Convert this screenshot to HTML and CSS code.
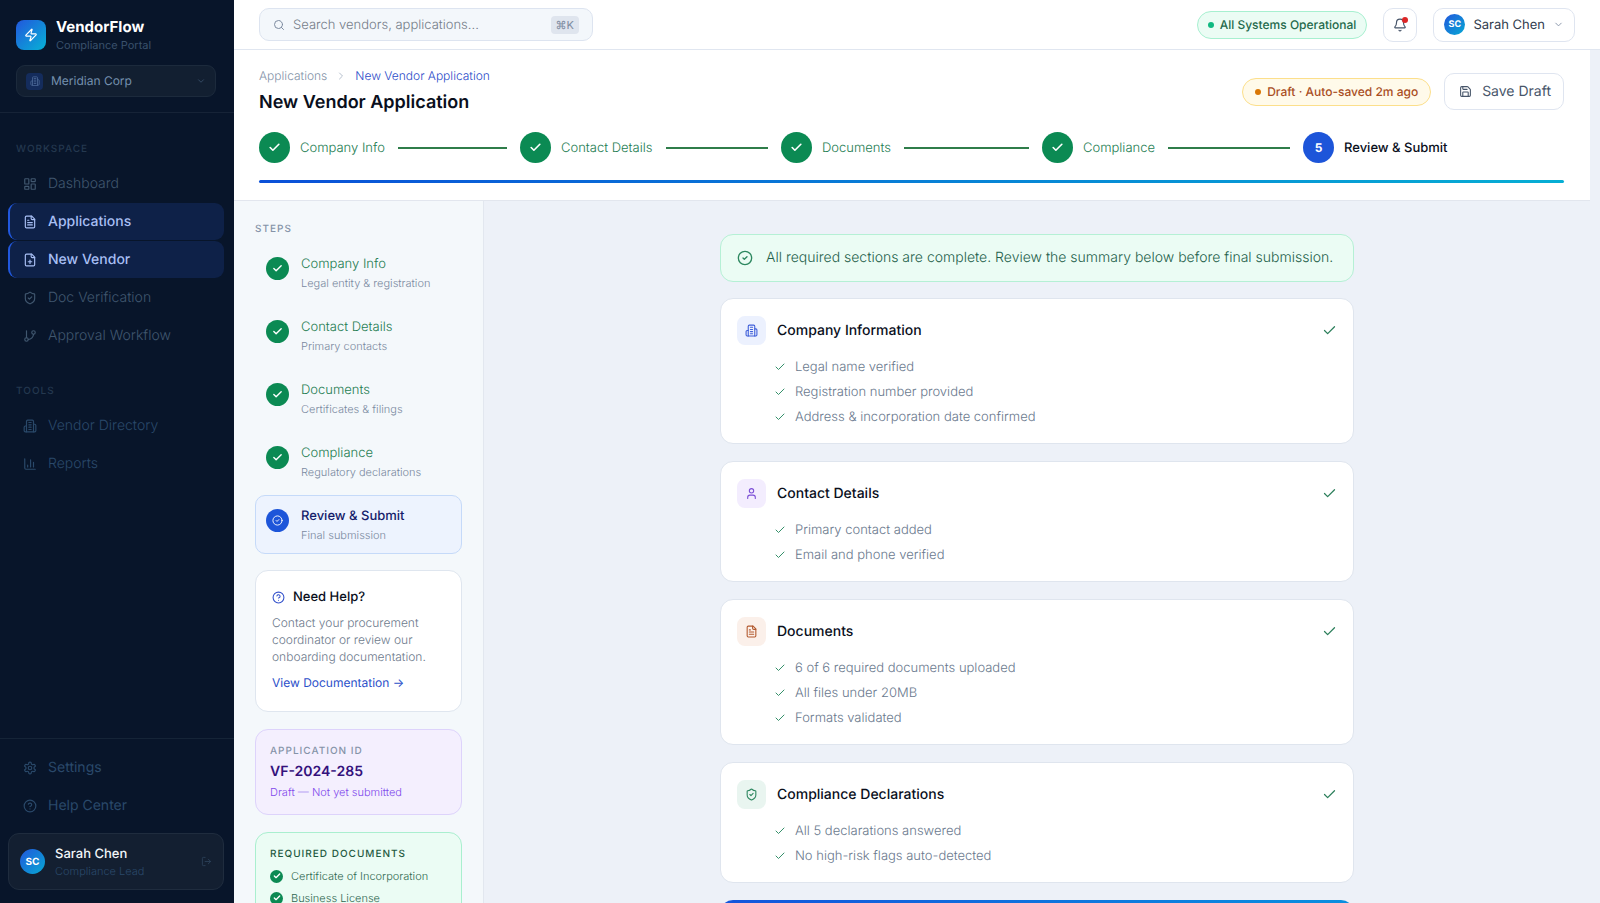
FILE: index.html
```html
<!DOCTYPE html>
<html lang="en">
<head>
    <meta charset="UTF-8">
    <meta name="viewport" content="width=device-width, initial-scale=1.0">
    <title>VendorFlow - New Vendor Application</title>
    <link rel="stylesheet" href="styles.css">
</head>
<body>
    <!-- icon set -->
    <svg class="sprite" aria-hidden="true">
        <symbol id="zap" viewBox="0 0 24 24"><path d="M4 14a1 1 0 0 1-.78-1.63l9.9-10.2a.5.5 0 0 1 .86.46l-1.92 6.02A1 1 0 0 0 13 10h7a1 1 0 0 1 .78 1.63l-9.9 10.2a.5.5 0 0 1-.86-.46l1.92-6.02A1 1 0 0 0 11 14z"/></symbol>
        <symbol id="building" viewBox="0 0 24 24"><path d="M6 22V4a2 2 0 0 1 2-2h8a2 2 0 0 1 2 2v18Z"/><path d="M6 12H4a2 2 0 0 0-2 2v6a2 2 0 0 0 2 2h2"/><path d="M18 9h2a2 2 0 0 1 2 2v9a2 2 0 0 1-2 2h-2"/><path d="M10 6h4M10 10h4M10 14h4M10 18h4"/></symbol>
        <symbol id="down" viewBox="0 0 24 24"><path d="m6 9 6 6 6-6"/></symbol>
        <symbol id="right" viewBox="0 0 24 24"><path d="m9 18 6-6-6-6"/></symbol>
        <symbol id="dashboard" viewBox="0 0 24 24"><rect x="3" y="3" width="7" height="9" rx="1"/><rect x="14" y="3" width="7" height="5" rx="1"/><rect x="14" y="12" width="7" height="9" rx="1"/><rect x="3" y="16" width="7" height="5" rx="1"/></symbol>
        <symbol id="file" viewBox="0 0 24 24"><path d="M15 2H6a2 2 0 0 0-2 2v16a2 2 0 0 0 2 2h12a2 2 0 0 0 2-2V7Z"/><path d="M14 2v4a2 2 0 0 0 2 2h4M10 9H8M16 13H8M16 17H8"/></symbol>
        <symbol id="file-plus" viewBox="0 0 24 24"><path d="M15 2H6a2 2 0 0 0-2 2v16a2 2 0 0 0 2 2h12a2 2 0 0 0 2-2V7Z"/><path d="M14 2v4a2 2 0 0 0 2 2h4M9 15h6M12 12v6"/></symbol>
        <symbol id="shield" viewBox="0 0 24 24"><path d="M20 13c0 5-3.500 7.500-7.660 8.950a1 1 0 0 1-.67-.01C7.500 20.500 4 18 4 13V6a1 1 0 0 1 1-1c2 0 4.500-1.200 6.240-2.720a1.170 1.170 0 0 1 1.520 0C14.510 3.810 17 5 19 5a1 1 0 0 1 1 1z"/><path d="m9 12 2 2 4-4"/></symbol>
        <symbol id="branch" viewBox="0 0 24 24"><path d="M6 3v12"/><circle cx="18" cy="6" r="3"/><circle cx="6" cy="18" r="3"/><path d="M18 9a9 9 0 0 1-9 9"/></symbol>
        <symbol id="chart" viewBox="0 0 24 24"><path d="M3 3v16a2 2 0 0 0 2 2h16M18 17V9M13 17V5M8 17v-3"/></symbol>
        <symbol id="settings" viewBox="0 0 24 24"><path d="M12.220 2h-.44a2 2 0 0 0-2 2v.18a2 2 0 0 1-1 1.730l-.43.25a2 2 0 0 1-2 0l-.15-.08a2 2 0 0 0-2.730.73l-.22.38a2 2 0 0 0 .73 2.730l.15.1a2 2 0 0 1 1 1.720v.51a2 2 0 0 1-1 1.740l-.15.09a2 2 0 0 0-.73 2.730l.22.38a2 2 0 0 0 2.730.73l.15-.08a2 2 0 0 1 2 0l.43.25a2 2 0 0 1 1 1.730V20a2 2 0 0 0 2 2h.44a2 2 0 0 0 2-2v-.18a2 2 0 0 1 1-1.730l.43-.25a2 2 0 0 1 2 0l.15.08a2 2 0 0 0 2.730-.73l.22-.39a2 2 0 0 0-.73-2.730l-.15-.08a2 2 0 0 1-1-1.740v-.5a2 2 0 0 1 1-1.740l.15-.09a2 2 0 0 0 .73-2.730l-.22-.38a2 2 0 0 0-2.730-.73l-.15.08a2 2 0 0 1-2 0l-.43-.25a2 2 0 0 1-1-1.730V4a2 2 0 0 0-2-2z"/><circle cx="12" cy="12" r="3"/></symbol>
        <symbol id="help" viewBox="0 0 24 24"><circle cx="12" cy="12" r="10"/><path d="M9.090 9a3 3 0 0 1 5.830 1c0 2-3 3-3 3M12 17h.01"/></symbol>
        <symbol id="logout" viewBox="0 0 24 24"><path d="M9 21H5a2 2 0 0 1-2-2V5a2 2 0 0 1 2-2h4M16 17l5-5-5-5M21 12H9"/></symbol>
        <symbol id="search" viewBox="0 0 24 24"><circle cx="11" cy="11" r="8"/><path d="m21 21-4.300-4.300"/></symbol>
        <symbol id="bell" viewBox="0 0 24 24"><path d="M10.268 21a2 2 0 0 0 3.464 0"/><path d="M3.262 15.326A1 1 0 0 0 4 17h16a1 1 0 0 0 .74-1.673C19.410 13.956 18 12.499 18 8A6 6 0 0 0 6 8c0 4.499-1.411 5.956-2.738 7.326"/></symbol>
        <symbol id="save" viewBox="0 0 24 24"><path d="M15.200 3a2 2 0 0 1 1.400.6l3.800 3.800a2 2 0 0 1 .6 1.400V19a2 2 0 0 1-2 2H5a2 2 0 0 1-2-2V5a2 2 0 0 1 2-2z"/><path d="M17 21v-7a1 1 0 0 0-1-1H8a1 1 0 0 0-1 1v7M7 3v4a1 1 0 0 0 1 1h7"/></symbol>
        <symbol id="check" viewBox="0 0 24 24"><path d="M20 6 9 17l-5-5"/></symbol>
        <symbol id="circle-check" viewBox="0 0 24 24"><circle cx="12" cy="12" r="10"/><path d="m9 12 2 2 4-4"/></symbol>
        <symbol id="user" viewBox="0 0 24 24"><path d="M19 21v-2a4 4 0 0 0-4-4H9a4 4 0 0 0-4 4v2"/><circle cx="12" cy="7" r="4"/></symbol>
    </svg>

    <aside class="sidebar">
        <div class="brand">
            <div class="brand-row">
                <span class="logo"><svg class="icon"><use href="#zap"/></svg></span>
                <div>
                    <div class="brand-name">VendorFlow</div>
                    <div class="brand-sub">Compliance Portal</div>
                </div>
            </div>
            <div class="org">
                <span class="org-icon"><svg class="icon"><use href="#building"/></svg></span>
                <select aria-label="Organization">
                    <option>Meridian Corp</option>
                </select>
                <svg class="icon small"><use href="#down"/></svg>
            </div>
        </div>

        <nav class="menu">
            <h2>Workspace</h2>
            <a href="#"><svg class="icon"><use href="#dashboard"/></svg>Dashboard</a>
            <a href="#" class="active"><svg class="icon"><use href="#file"/></svg>Applications</a>
            <a href="#" class="active"><svg class="icon"><use href="#file-plus"/></svg>New Vendor</a>
            <a href="#"><svg class="icon"><use href="#shield"/></svg>Doc Verification</a>
            <a href="#"><svg class="icon"><use href="#branch"/></svg>Approval Workflow</a>
            <h2>Tools</h2>
            <a href="#" class="dim"><svg class="icon"><use href="#building"/></svg>Vendor Directory</a>
            <a href="#" class="dim"><svg class="icon"><use href="#chart"/></svg>Reports</a>
        </nav>

        <div class="sidebar-bottom">
            <a href="#" class="dim"><svg class="icon"><use href="#settings"/></svg>Settings</a>
            <a href="#" class="dim"><svg class="icon"><use href="#help"/></svg>Help Center</a>
            <div class="profile">
                <span class="avatar">SC</span>
                <div class="profile-text">
                    <div class="profile-name">Sarah Chen</div>
                    <div class="profile-role">Compliance Lead</div>
                </div>
                <button class="logout" aria-label="Log out"><svg class="icon"><use href="#logout"/></svg></button>
            </div>
        </div>
    </aside>

    <div class="main">
        <header class="topbar">
            <div class="search">
                <svg class="icon"><use href="#search"/></svg>
                <input type="text" placeholder="Search vendors, applications..." aria-label="Search">
                <kbd>⌘K</kbd>
            </div>
            <div class="topbar-right">
                <span class="pill green">All Systems Operational</span>
                <button class="bell" aria-label="Notifications"><svg class="icon"><use href="#bell"/></svg><span class="badge"></span></button>
                <button class="user"><span class="avatar">SC</span>Sarah Chen<svg class="icon small"><use href="#down"/></svg></button>
            </div>
        </header>

        <div class="page">
            <div class="page-header">
                <div class="title-row">
                    <div>
                        <nav class="breadcrumb">
                            <a href="#">Applications</a>
                            <svg class="icon small"><use href="#right"/></svg>
                            <a href="#" class="current">New Vendor Application</a>
                        </nav>
                        <h1>New Vendor Application</h1>
                    </div>
                    <div class="actions">
                        <span class="pill amber">Draft · Auto-saved 2m ago</span>
                        <button class="save"><svg class="icon"><use href="#save"/></svg>Save Draft</button>
                    </div>
                </div>

                <ol class="stepper">
                    <li><span class="dot"><svg class="icon"><use href="#check"/></svg></span>Company Info<span class="line"></span></li>
                    <li><span class="dot"><svg class="icon"><use href="#check"/></svg></span>Contact Details<span class="line"></span></li>
                    <li><span class="dot"><svg class="icon"><use href="#check"/></svg></span>Documents<span class="line"></span></li>
                    <li><span class="dot"><svg class="icon"><use href="#check"/></svg></span>Compliance<span class="line"></span></li>
                    <li class="current"><span class="dot">5</span>Review &amp; Submit</li>
                </ol>
                <div class="progress"></div>
            </div>

            <div class="columns">
                <aside class="steps">
                    <h2>Steps</h2>
                    <div class="step-list">
                        <a href="#" class="step">
                            <span class="dot"><svg class="icon"><use href="#check"/></svg></span>
                            <span><strong>Company Info</strong><small>Legal entity &amp; registration</small></span>
                        </a>
                        <a href="#" class="step">
                            <span class="dot"><svg class="icon"><use href="#check"/></svg></span>
                            <span><strong>Contact Details</strong><small>Primary contacts</small></span>
                        </a>
                        <a href="#" class="step">
                            <span class="dot"><svg class="icon"><use href="#check"/></svg></span>
                            <span><strong>Documents</strong><small>Certificates &amp; filings</small></span>
                        </a>
                        <a href="#" class="step">
                            <span class="dot"><svg class="icon"><use href="#check"/></svg></span>
                            <span><strong>Compliance</strong><small>Regulatory declarations</small></span>
                        </a>
                        <a href="#" class="step current">
                            <span class="dot"><svg class="icon"><use href="#circle-check"/></svg></span>
                            <span><strong>Review &amp; Submit</strong><small>Final submission</small></span>
                        </a>
                    </div>

                    <div class="box help">
                        <h3><svg class="icon"><use href="#help"/></svg>Need Help?</h3>
                        <p>Contact your procurement coordinator or review our onboarding documentation.</p>
                        <a href="#">View Documentation →</a>
                    </div>

                    <div class="box app-id">
                        <h4>Application ID</h4>
                        <div class="id">VF-2024-285</div>
                        <div class="id-status">Draft — Not yet submitted</div>
                    </div>

                    <div class="box required">
                        <h4>Required Documents</h4>
                        <ul>
                            <li><span class="dot"><svg class="icon"><use href="#check"/></svg></span>Certificate of Incorporation</li>
                            <li><span class="dot"><svg class="icon"><use href="#check"/></svg></span>Business License</li>
                        </ul>
                    </div>
                </aside>

                <main class="review">
                    <div class="notice"><svg class="icon"><use href="#circle-check"/></svg>All required sections are complete. Review the summary below before final submission.</div>

                    <section class="card">
                        <div class="card-head">
                            <span class="card-icon blue"><svg class="icon"><use href="#building"/></svg></span>
                            <h3>Company Information</h3>
                            <svg class="icon done"><use href="#check"/></svg>
                        </div>
                        <ul>
                            <li><svg class="icon"><use href="#check"/></svg>Legal name verified</li>
                            <li><svg class="icon"><use href="#check"/></svg>Registration number provided</li>
                            <li><svg class="icon"><use href="#check"/></svg>Address &amp; incorporation date confirmed</li>
                        </ul>
                    </section>

                    <section class="card">
                        <div class="card-head">
                            <span class="card-icon purple"><svg class="icon"><use href="#user"/></svg></span>
                            <h3>Contact Details</h3>
                            <svg class="icon done"><use href="#check"/></svg>
                        </div>
                        <ul>
                            <li><svg class="icon"><use href="#check"/></svg>Primary contact added</li>
                            <li><svg class="icon"><use href="#check"/></svg>Email and phone verified</li>
                        </ul>
                    </section>

                    <section class="card">
                        <div class="card-head">
                            <span class="card-icon orange"><svg class="icon"><use href="#file"/></svg></span>
                            <h3>Documents</h3>
                            <svg class="icon done"><use href="#check"/></svg>
                        </div>
                        <ul>
                            <li><svg class="icon"><use href="#check"/></svg>6 of 6 required documents uploaded</li>
                            <li><svg class="icon"><use href="#check"/></svg>All files under 20MB</li>
                            <li><svg class="icon"><use href="#check"/></svg>Formats validated</li>
                        </ul>
                    </section>

                    <section class="card">
                        <div class="card-head">
                            <span class="card-icon teal"><svg class="icon"><use href="#shield"/></svg></span>
                            <h3>Compliance Declarations</h3>
                            <svg class="icon done"><use href="#check"/></svg>
                        </div>
                        <ul>
                            <li><svg class="icon"><use href="#check"/></svg>All 5 declarations answered</li>
                            <li><svg class="icon"><use href="#check"/></svg>No high-risk flags auto-detected</li>
                        </ul>
                    </section>

                    <div class="submit-panel"></div>
                </main>
            </div>
        </div>
    </div>
</body>
</html>
```
FILE: styles.css
```css
* {
    box-sizing: border-box;
}
body {
    margin: 0;
    height: 100vh;
    display: flex;
    font-family: Inter, "Liberation Sans", sans-serif;
    font-size: 13px;
    font-weight: 300;
    line-height: 20px;
    text-rendering: geometricPrecision;
    background-color: #edf1f8;
    color: #0a0f1c;
    overflow: hidden;
}
h1, h2, h3, h4, p, ul, ol {
    margin: 0;
    padding: 0;
}
ul, ol {
    list-style: none;
}
a {
    text-decoration: none;
}
button, input, select {
    font: inherit;
    color: inherit;
    text-rendering: inherit;
}
button {
    cursor: pointer;
}
.sprite {
    display: none;
}
.icon {
    width: 14px;
    height: 14px;
    flex-shrink: 0;
    fill: none;
    stroke: currentColor;
    stroke-width: 2;
    stroke-linecap: round;
    stroke-linejoin: round;
}
.icon.small {
    width: 12px;
    height: 12px;
}
.avatar {
    display: flex;
    align-items: center;
    justify-content: center;
    flex-shrink: 0;
    border-radius: 50%;
    background: linear-gradient(135deg, #2257dc, #06a9d4);
    color: white;
    font-weight: 700;
}
.dot {
    display: flex;
    align-items: center;
    justify-content: center;
    flex-shrink: 0;
    border-radius: 50%;
    background-color: #0b8a53;
    color: white;
}
.dot .icon {
    stroke-width: 3;
}

/* sidebar */
.sidebar {
    width: 234px;
    flex-shrink: 0;
    display: flex;
    flex-direction: column;
    background-color: #08152a;
    color: #3a516c;
}
.brand {
    padding: 17px 18px 15px 16px;
    border-bottom: 1px solid #162337;
}
.brand-row {
    display: flex;
    align-items: center;
    gap: 10px;
    margin-bottom: 12px;
}
.logo {
    display: flex;
    align-items: center;
    justify-content: center;
    width: 30px;
    height: 30px;
    border-radius: 8px;
    background: linear-gradient(135deg, #2257dc, #06b2d6);
    color: white;
}
.brand-name {
    color: white;
    font-size: 15px;
    font-weight: 700;
    line-height: 20px;
}
.brand-sub {
    font-size: 11px;
    font-weight: 400;
    line-height: 16px;
}
.org {
    display: flex;
    align-items: center;
    gap: 8px;
    height: 32px;
    padding: 0 9px;
    border: 1px solid #1c2a3c;
    border-radius: 9px;
    background-color: #121f31;
}
.org-icon {
    display: flex;
    align-items: center;
    justify-content: center;
    width: 17px;
    height: 17px;
    border-radius: 4px;
    background-color: #142c5c;
    color: #4a6796;
}
.org-icon .icon {
    width: 10px;
    height: 10px;
}
.org select {
    flex: 1;
    min-width: 0;
    padding: 0;
    border: none;
    background: none;
    appearance: none;
    color: #7490ae;
    font-size: 12px;
    font-weight: 400;
}
.org .small {
    width: 10px;
    height: 10px;
}
.menu {
    flex: 1;
    padding: 28px 10px 0 8px;
}
.menu h2 {
    padding: 0 8px;
    margin-bottom: 8px;
    color: #24384f;
    font-size: 10px;
    font-weight: 500;
    line-height: 16px;
    letter-spacing: 1px;
    text-transform: uppercase;
}
.menu a + h2 {
    margin-top: 29px;
}
.sidebar a {
    display: flex;
    align-items: center;
    gap: 11px;
    height: 37px;
    margin-bottom: 1px;
    padding-left: 13px;
    border-left: 2px solid transparent;
    border-radius: 9px;
    color: #40576f;
    font-size: 14px;
}
.sidebar a.active {
    border-left-color: #2158de;
    background-color: #0e2148;
    color: #a8bff4;
    font-weight: 500;
}
.sidebar a.dim {
    color: #2a496a;
}
.sidebar-bottom {
    padding: 10px 10px 13px 8px;
    border-top: 1px solid #152437;
}
.sidebar-bottom a {
    font-weight: 400;
}
.profile {
    display: flex;
    align-items: center;
    gap: 10px;
    height: 57px;
    margin-top: 9px;
    padding: 0 11px;
    border: 1px solid #1f2c3e;
    border-radius: 11px;
    background-color: #131f31;
}
.profile .avatar {
    width: 25px;
    height: 25px;
    font-size: 10px;
}
.profile-text {
    flex: 1;
}
.profile-name {
    color: #f1f5f9;
    font-size: 13px;
    font-weight: 500;
    line-height: 18px;
}
.profile-role {
    color: #2a496a;
    font-size: 11px;
    line-height: 16px;
}
.logout {
    display: flex;
    padding: 0;
    border: none;
    background: none;
    color: #2b4058;
}
.logout .icon {
    width: 11px;
    height: 11px;
}

/* top bar */
.main {
    flex: 1;
    min-width: 0;
    display: flex;
    flex-direction: column;
}
.topbar {
    display: flex;
    align-items: center;
    justify-content: space-between;
    height: 50px;
    flex-shrink: 0;
    padding: 0 25px;
    border-bottom: 1px solid #e0e6f0;
    background-color: white;
}
.search {
    display: flex;
    align-items: center;
    gap: 8px;
    width: 334px;
    height: 33px;
    padding: 0 13px;
    border: 1px solid #dde4f0;
    border-radius: 10px;
    background-color: #f3f7fb;
    color: #7d8ba0;
}
.search .icon {
    width: 12px;
    height: 12px;
}
.search input {
    flex: 1;
    min-width: 0;
    padding: 0;
    border: none;
    outline: none;
    background: none;
}
.search input::placeholder {
    color: #757d89;
}
kbd {
    padding: 0 5px;
    border-radius: 4px;
    background-color: #dfe5ee;
    color: #7d8ba0;
    font-family: inherit;
    font-size: 11px;
    font-weight: 400;
    line-height: 18px;
}
.topbar-right {
    display: flex;
    align-items: center;
    gap: 16px;
}
.pill {
    display: flex;
    align-items: center;
    gap: 6px;
    height: 28px;
    padding: 0 10px;
    border: 1px solid;
    border-radius: 14px;
    font-size: 12px;
    font-weight: 500;
}
.pill::before {
    content: "";
    width: 6px;
    height: 6px;
    border-radius: 50%;
    background-color: #10b981;
}
.pill.green {
    border-color: #a7f0d0;
    background-color: #ebfcf4;
    color: #24694b;
}
.pill.amber {
    padding: 0 12px;
    border-color: #fcdf8b;
    background-color: #fffaea;
    color: #a94e1f;
}
.pill.amber::before {
    background-color: #d97706;
}
.bell, .user, .save {
    display: flex;
    align-items: center;
    height: 34px;
    border: 1px solid #dfe5f0;
    border-radius: 10px;
    background-color: white;
}
.bell {
    position: relative;
    justify-content: center;
    width: 34px;
    padding: 0;
    color: #475569;
}
.badge {
    position: absolute;
    top: 8px;
    right: 8px;
    width: 6px;
    height: 6px;
    border-radius: 50%;
    background-color: #dc2626;
}
.user {
    gap: 8px;
    padding: 0 10px;
    color: #303b4d;
    font-weight: 400;
}
.user .avatar {
    width: 21px;
    height: 21px;
    font-size: 9px;
}
.user .small {
    width: 11px;
    height: 11px;
    color: #8492a6;
}

/* page header */
.page {
    flex: 1;
    min-height: 0;
    margin-right: 10px;
    overflow-y: auto;
    scrollbar-width: none;
}
.page-header {
    padding: 16px 26px 17px 25px;
    border-bottom: 1px solid #e2e6ee;
    background-color: white;
}
.title-row {
    display: flex;
    align-items: center;
    justify-content: space-between;
    margin-bottom: 15px;
}
.breadcrumb {
    display: flex;
    align-items: center;
    gap: 8px;
    font-size: 12px;
}
.breadcrumb .icon {
    color: #b6c0ce;
}
.breadcrumb a {
    color: #8493a8;
}
.breadcrumb a.current {
    color: #2b4bc9;
}
h1 {
    margin-top: 3px;
    font-size: 18px;
    font-weight: 600;
    line-height: 28px;
}
.actions {
    display: flex;
    align-items: center;
    gap: 13px;
}
.save {
    gap: 10px;
    height: 37px;
    padding: 0 12px 0 14px;
    color: #475569;
    font-size: 14px;
    font-weight: 400;
}
.save .icon {
    width: 13px;
    height: 13px;
}
.stepper {
    display: flex;
    margin-bottom: 17px;
}
.stepper li {
    flex: 1 1 0;
    display: flex;
    align-items: center;
    gap: 10px;
    color: #247d52;
}
.stepper li.current {
    color: #0a0f1c;
    font-weight: 500;
}
.stepper .dot {
    width: 31px;
    height: 31px;
    font-size: 12px;
    font-weight: 700;
}
.stepper .icon {
    width: 13px;
    height: 13px;
}
.stepper .current .dot {
    background-color: #1d55d9;
}
.line {
    flex: 1;
    height: 2px;
    margin: 0 13px 0 3px;
    background-color: #2f7d4a;
}
.progress {
    height: 3px;
    border-radius: 2px;
    background: linear-gradient(90deg, #0a50d8, #06aed4);
}

/* left column */
.columns {
    display: flex;
}
.steps {
    width: 250px;
    flex-shrink: 0;
    padding: 20px 21px;
    border-right: 1px solid #e2e7ef;
    background-color: #f4f8fb;
}
.steps h2, .steps h4 {
    color: #8593a8;
    font-size: 10px;
    font-weight: 500;
    line-height: 16px;
    letter-spacing: 1px;
    text-transform: uppercase;
}
.steps h2 {
    margin-bottom: 6px;
}
.step-list {
    display: flex;
    flex-direction: column;
    gap: 4px;
    margin-bottom: 16px;
}
.step {
    display: flex;
    gap: 12px;
    height: 59px;
    padding: 10px;
    border: 1px solid transparent;
    border-radius: 10px;
}
.step .dot {
    width: 23px;
    height: 23px;
    margin-top: 3px;
}
.step .icon {
    width: 11px;
    height: 11px;
}
.step strong, .step small {
    display: block;
}
.step strong {
    color: #247d52;
    font-size: 13px;
    font-weight: 300;
    line-height: 20px;
}
.step small {
    color: #7a89a0;
    font-size: 11px;
    line-height: 18px;
}
.step.current {
    border-color: #c5daf9;
    background-color: #edf3fe;
}
.step.current .dot {
    background-color: #1d55d9;
}
.step.current .icon {
    stroke-width: 2;
}
.step.current strong {
    color: #151d6b;
    font-weight: 500;
}
.box {
    margin-bottom: 17px;
    padding: 13px 14px;
    border: 1px solid #dfe6ef;
    border-radius: 13px;
}
.help {
    padding: 16px;
    background-color: white;
}
.help h3 {
    display: flex;
    align-items: center;
    gap: 8px;
    margin-bottom: 7px;
    font-size: 13px;
    font-weight: 500;
}
.help .icon {
    width: 13px;
    height: 13px;
    color: #3553cc;
}
.help p {
    margin-bottom: 8px;
    color: #6d7a8c;
    font-size: 12px;
    line-height: 17px;
}
.help a {
    display: block;
    margin-bottom: 2px;
    color: #2b4fc9;
    font-size: 12px;
    font-weight: 400;
}
.app-id {
    border-color: #ddd3fb;
    background-color: #f4effe;
}
.id {
    margin-top: 3px;
    color: #34127c;
    font-size: 14px;
    font-weight: 600;
}
.id-status {
    margin-top: 1px;
    color: #8049ec;
    font-size: 11px;
    line-height: 18px;
}
.required {
    border-color: #a9efcf;
    background-color: #ebfcf4;
}
.steps .required h4 {
    margin-bottom: 4px;
    color: #1f5a41;
}
.required li {
    display: flex;
    align-items: center;
    gap: 8px;
    margin-bottom: 2px;
    color: #2f6850;
    font-size: 11px;
}
.required .dot {
    width: 13px;
    height: 13px;
}
.required .icon {
    width: 8px;
    height: 8px;
    stroke-width: 4;
}

/* review column */
.review {
    flex: 1;
    min-width: 0;
    max-width: 634px;
    margin: 0 auto;
    padding-top: 33px;
}
.notice {
    display: flex;
    align-items: center;
    gap: 13px;
    min-height: 48px;
    margin-bottom: 16px;
    padding: 0 16px;
    border: 1px solid #b5f0d5;
    border-radius: 13px;
    background-color: #ebfcf4;
    color: #23604a;
    font-size: 14px;
}
.notice .icon {
    width: 16px;
    height: 16px;
    color: #2c875f;
}
.card {
    margin-bottom: 17px;
    padding: 17px 16px 16px;
    border: 1px solid #dfe5ee;
    border-radius: 13px;
    background-color: white;
}
.card-head {
    display: flex;
    align-items: center;
    gap: 11px;
    margin-bottom: 12px;
}
.card-icon {
    display: flex;
    align-items: center;
    justify-content: center;
    width: 29px;
    height: 29px;
    border-radius: 8px;
}
.card-icon.blue {
    background-color: #ecf1fe;
    color: #3f5fd9;
}
.card-icon.purple {
    background-color: #f3edfe;
    color: #7c4fd6;
}
.card-icon.orange {
    background-color: #fbf0ea;
    color: #b3592f;
}
.card-icon.teal {
    background-color: #e9f5f0;
    color: #2c875f;
}
.card-icon .icon {
    width: 13px;
    height: 13px;
}
.card h3 {
    flex: 1;
    font-size: 14px;
    font-weight: 500;
}
.card .done {
    width: 15px;
    height: 15px;
    color: #2c7f5b;
}
.card ul {
    display: flex;
    flex-direction: column;
    gap: 5px;
    padding-left: 37px;
}
.card li {
    display: flex;
    align-items: center;
    gap: 9px;
    color: #6a798e;
}
.card li .icon {
    width: 12px;
    height: 12px;
    color: #35906a;
}
.submit-panel {
    height: 120px;
    border-radius: 13px;
    background: linear-gradient(90deg, #1455dc, #0a8fdf);
}
```
